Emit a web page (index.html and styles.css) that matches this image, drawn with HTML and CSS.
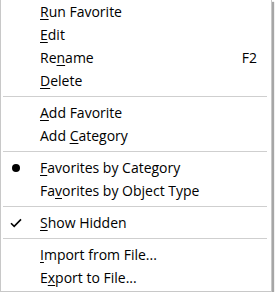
FILE: index.html
```html
<!DOCTYPE html>
<html>
<head>
<meta charset="utf-8">
<link rel="stylesheet" href="styles.css">
</head>
<body>
<div class="menu">
  <div class="item"><span class="mark"></span><span class="label"><u>R</u>un Favorite</span></div>
  <div class="item"><span class="mark"></span><span class="label"><u>E</u>dit</span></div>
  <div class="item"><span class="mark"></span><span class="label">Re<u>n</u>ame</span><span class="key">F2</span></div>
  <div class="item"><span class="mark"></span><span class="label"><u>D</u>elete</span></div>
  <div class="sep"></div>
  <div class="item"><span class="mark"></span><span class="label"><u>A</u>dd Favorite</span></div>
  <div class="item"><span class="mark"></span><span class="label">Add <u>C</u>ategory</span></div>
  <div class="sep"></div>
  <div class="item"><span class="mark"><span class="dot"></span></span><span class="label"><u>F</u>avorites by Category</span></div>
  <div class="item"><span class="mark"></span><span class="label">Fa<u>v</u>orites by Object Type</span></div>
  <div class="sep"></div>
  <div class="item"><span class="mark"><svg width="12" height="10" viewBox="0 0 12 10"><path d="M1 5.2 L4.2 8.4 L11 1.4" fill="none" stroke="#000" stroke-width="1.6"/></svg></span><span class="label"><u>S</u>how Hidden</span></div>
  <div class="sep"></div>
  <div class="item"><span class="mark"></span><span class="label"><u>I</u>mport from File...</span></div>
  <div class="item"><span class="mark"></span><span class="label">E<u>x</u>port to File...</span></div>
</div>
</body>
</html>
```
FILE: styles.css
```css
html, body {
  margin: 0;
  padding: 0;
  background: #ffffff;
}
.menu {
  width: 270px;
  height: 291px;
  background: #ffffff;
  border: 1px solid #c8c8c8;
  border-top: none;
  box-shadow: 2px 2px 1px rgba(0,0,0,0.35);
  font-family: "Open Sans", "Noto Sans", sans-serif;
  font-size: 14px;
  color: #000;
  display: flex;
  flex-direction: column;
}
.item {
  height: 23px;
  display: flex;
  align-items: center;
  padding-right: 14px;
}
.mark {
  width: 39px;
  display: flex;
  justify-content: center;
  align-items: center;
  flex: none;
  padding-right: 9px;
  box-sizing: border-box;
}
.dot {
  width: 8px;
  height: 8px;
  border-radius: 50%;
  background: #000;
}
.label {
  flex: 1;
  white-space: nowrap;
}
.key {
  flex: none;
}
u {
  text-decoration-thickness: 1px;
  text-underline-offset: 2px;
}
.sep {
  height: 9px;
  display: flex;
  align-items: center;
  padding: 0 4px 0 2px;
}
.sep::before {
  content: "";
  flex: 1;
  height: 1px;
  background: #cfcfcf;
}
```
